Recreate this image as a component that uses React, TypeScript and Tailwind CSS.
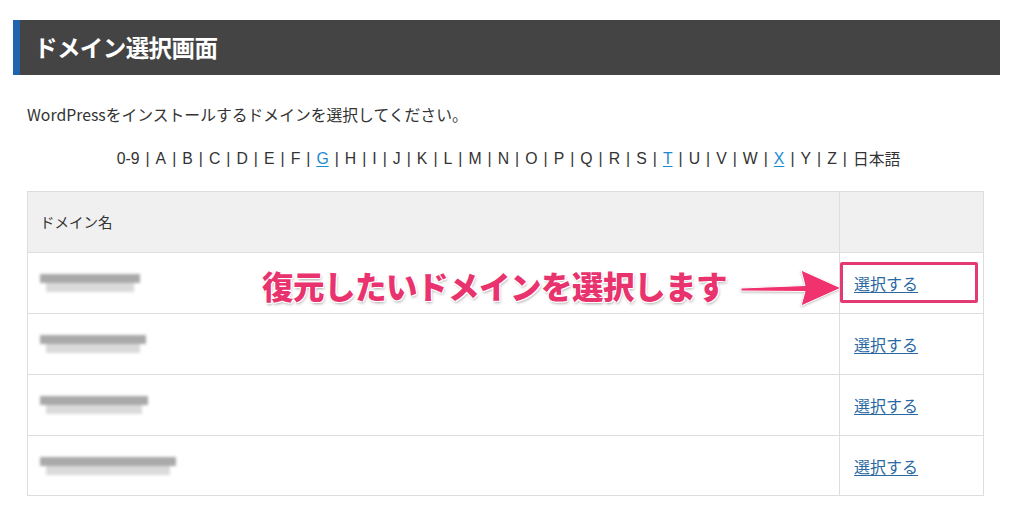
import React from 'react';

const jp = { fontFamily: '"Noto Sans CJK JP", "Noto Sans", sans-serif' };

const letters = ['0-9', 'A', 'B', 'C', 'D', 'E', 'F', 'G', 'H', 'I', 'J', 'K', 'L', 'M', 'N', 'O', 'P', 'Q', 'R', 'S', 'T', 'U', 'V', 'W', 'X', 'Y', 'Z', '日本語'];
const linked = ['G', 'T', 'X'];

// blurred placeholder for the hidden domain names
const Blurred: React.FC<{ w: number }> = ({ w }) => (
  <div className="flex flex-col blur-[1.5px]">
    <div className="h-[9px] bg-[#a9a9a9]" style={{ width: w }} />
    <div className="h-[9px] bg-[#dadada] ml-[6px]" style={{ width: w - 12 }} />
  </div>
);

const App: React.FC = () => {
  const rows = [100, 106, 108, 136];

  return (
    <div className="w-[1024px] h-[514px] bg-white text-[#333] overflow-hidden" style={jp}>
      <div className="pt-5 pl-[13px] pr-6">
        {/* Header */}
        <div className="h-[55px] bg-[#444] border-l-[7px] border-[#1f64ad] flex items-center pl-[14px]">
          <h1 className="text-[23.5px] font-bold text-white tracking-tight">ドメイン選択画面</h1>
        </div>
      </div>

      <div className="pl-[27px] pr-[40px]">
        <p className="mt-[28px] text-[15.8px] leading-6">WordPressをインストールするドメインを選択してください。</p>

        {/* Alphabet index */}
        <div className="mt-[20px] flex justify-center text-[15.8px] leading-6 pl-[6px] whitespace-nowrap" style={{ fontFamily: '"Liberation Sans", "Noto Sans CJK JP", sans-serif' }}>
          {letters.map((l, i) => (
            <span key={l} className="flex">
              {linked.includes(l) ? (
                <span className="text-[#1c8ad1] underline underline-offset-2">{l}</span>
              ) : (
                <span style={l === '日本語' ? jp : undefined}>{l}</span>
              )}
              {i < letters.length - 1 && <span className="mx-[6px]">|</span>}
            </span>
          ))}
        </div>
      </div>

      {/* Table */}
      <div className="mt-[20px] ml-[27px] w-[957px] border border-[#ddd] text-[14.5px]">
        <div className="flex h-[61px] bg-[#f0f0f0] border-b border-[#ddd]">
          <div className="flex-1 flex items-center pl-[12px]">ドメイン名</div>
          <div className="w-[144px] border-l border-[#ddd]" />
        </div>
        {rows.map((w, i) => (
          <div key={i} className={`flex ${i < rows.length - 1 ? 'h-[61px] border-b border-[#ddd]' : 'h-[59px]'}`}>
            <div className="flex-1 flex items-center pl-[12px] relative">
              <Blurred w={w} />
              {i === 0 && (
                <div className="absolute left-[234px] top-[9px] flex items-center whitespace-nowrap">
                  <span
                    className="text-[31.5px] font-black text-[#e8336e] tracking-[-0.5px]"
                    style={{ textShadow: '0 0 2px #fff, 1px 1px 0 #fff, -1px -1px 0 #fff, 1px -1px 0 #fff, -1px 1px 0 #fff, 1px 2px 3px rgba(0,0,0,0.35)' }}
                  >
                    復元したいドメインを選択します
                  </span>
                  <svg width="104" height="42" viewBox="0 0 104 42" className="ml-[12px] mt-[4px] shrink-0" style={{ filter: 'drop-shadow(0 1px 1px rgba(0,0,0,0.25))' }}>
                    <path d="M2 21 L66 18.5 L62 3 L102 21 L62 39 L66 24.5 L2 24 Z" fill="#f0336f" stroke="#fff" strokeWidth="1" />
                  </svg>
                </div>
              )}
            </div>
            <div className="w-[144px] border-l border-[#ddd] flex items-center pl-[14px] relative">
              <a className="text-[16px] text-[#2a68a2] underline underline-offset-2">選択する</a>
              {i === 0 && (
                <div className="absolute left-0 top-[9px] w-[138px] h-[41px] border-[3px] border-[#e33b71] rounded-[2px]" />
              )}
            </div>
          </div>
        ))}
      </div>
    </div>
  );
};

export default App;
